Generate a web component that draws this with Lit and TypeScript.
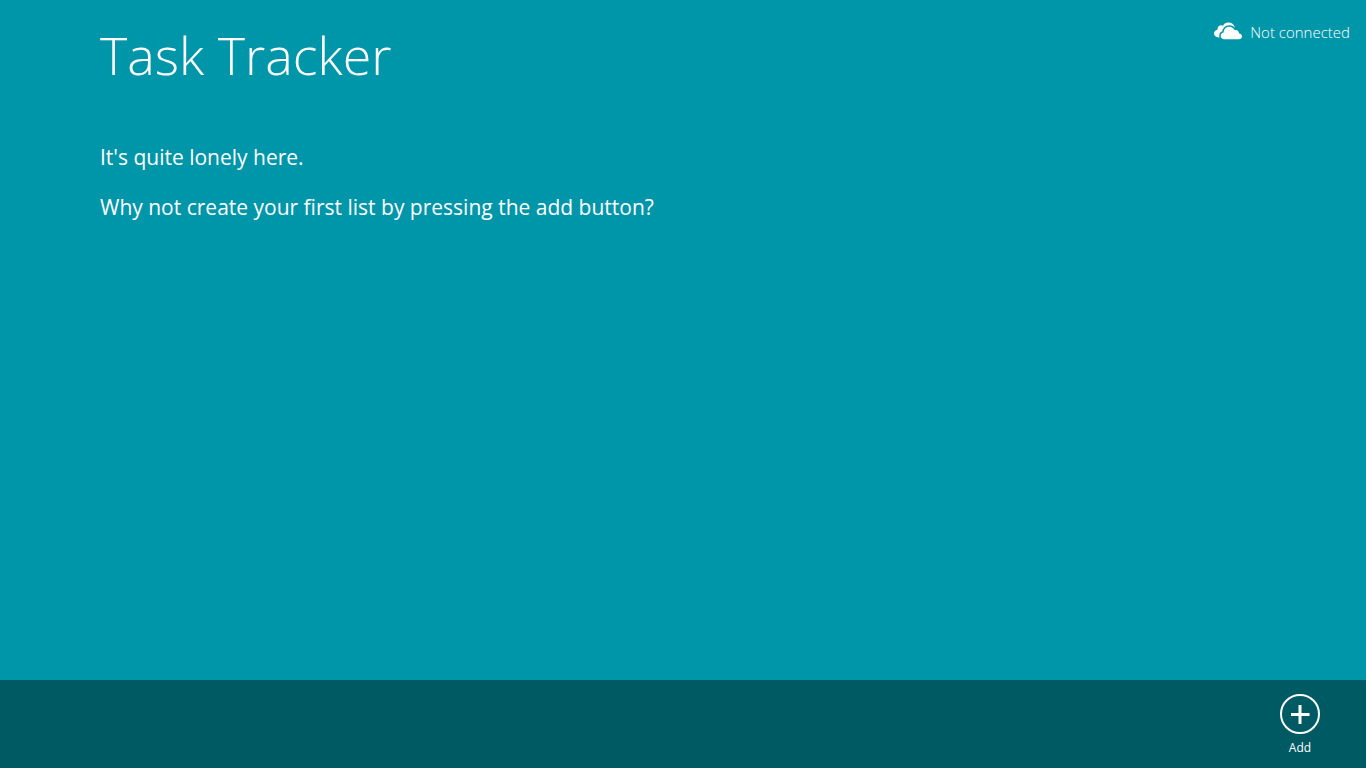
import { LitElement, html, css } from "lit";
import { customElement } from "lit/decorators.js";

@customElement("app-root")
export class AppRoot extends LitElement {
  static styles = css`
    :host {
      display: flex;
      flex-direction: column;
      min-height: 100vh;
      background: #0096aa;
      color: #fff;
      font-family: "Open Sans", "Noto Sans", sans-serif;
    }
    .header {
      display: flex;
      justify-content: space-between;
      align-items: flex-start;
      padding: 20px 16px 0 100px;
    }
    .title {
      margin: 0;
      font-size: 52px;
      line-height: 70px;
      font-weight: 300;
    }
    .status {
      display: flex;
      align-items: center;
      gap: 8px;
      font-size: 15px;
      line-height: 24px;
      font-weight: 300;
    }
    .cloud {
      display: block;
      width: 28px;
      height: 20px;
    }
    .back {
      fill: #fff;
    }
    .front {
      fill: #fff;
      stroke: #0096aa;
      stroke-width: 3px;
      paint-order: stroke;
    }
    .content {
      flex: 1;
      padding: 52px 100px 0;
      font-size: 21px;
      line-height: 30px;
    }
    .message {
      margin: 0 0 20px;
    }
    .appbar {
      display: flex;
      justify-content: flex-end;
      padding: 14px 16px 10px;
      background: #005a64;
    }
    .command {
      display: flex;
      flex-direction: column;
      align-items: center;
      gap: 4px;
      width: 100px;
      padding: 0;
      border: 0;
      background: none;
      color: inherit;
      font: 12px/20px "Open Sans", "Noto Sans", sans-serif;
      cursor: pointer;
    }
    .ring {
      display: block;
      width: 40px;
      height: 40px;
    }
  `;

  render() {
    return html`
      <header class="header">
        <h1 class="title">Task Tracker</h1>
        <div class="status">
          <svg class="cloud" viewBox="0 0 28 20" aria-hidden="true">
            <path
              class="back"
              d="M7 15.500H4.500C2 15.500 0 13.900 0 11.600C0 9.500 1.500 8 3.500 7.700C3.300 5.200 5 3.300 7.200 3.300C7.900 3.300 8.500 3.500 9 3.700C10.100 1.700 12 .500 14.300 .500C17.500 .500 20 2.500 20.800 5.300L16 12Z"
            />
            <path
              class="front"
              d="M10.300 17.200C8.200 17.200 6.700 15.800 6.700 13.800C6.700 12 8 10.700 9.700 10.500C9.700 7 12 4.700 15.200 4.700C17.700 4.700 19.600 6 20.600 8C23.200 7.600 25 9.200 25.200 11.500C26.900 11.700 28 12.800 28 14.300C28 16 26.800 17.200 25 17.200Z"
            />
          </svg>
          <span>Not connected</span>
        </div>
      </header>
      <main class="content">
        <p class="message">It's quite lonely here.</p>
        <p class="message">Why not create your first list by pressing the add button?</p>
      </main>
      <footer class="appbar">
        <button class="command" type="button">
          <svg class="ring" viewBox="0 0 40 40" fill="none" stroke="#fff" aria-hidden="true">
            <circle cx="20" cy="20" r="19" stroke-width="2" />
            <path d="M11 20.500h18.500M20 11v19" stroke-width="3" />
          </svg>
          <span>Add</span>
        </button>
      </footer>
    `;
  }
}
